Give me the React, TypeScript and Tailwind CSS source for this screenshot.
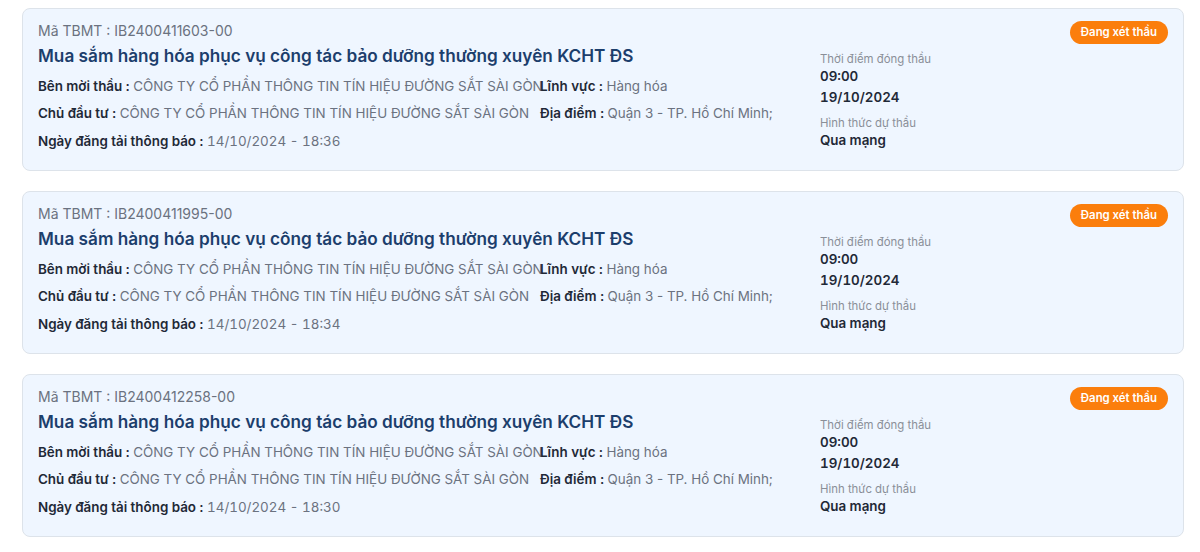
import React from 'react';

type Tender = {
  code: string;
  posted: string;
};

const tenders: Tender[] = [
  { code: 'IB2400411603-00', posted: '14/10/2024 - 18:36' },
  { code: 'IB2400411995-00', posted: '14/10/2024 - 18:34' },
  { code: 'IB2400412258-00', posted: '14/10/2024 - 18:30' },
];

const COMPANY = 'CÔNG TY CỔ PHẦN THÔNG TIN TÍN HIỆU ĐƯỜNG SẮT SÀI GÒN';

function Field({ label, value, nums }: { label: string; value: string; nums?: boolean }) {
  return (
    <span className="whitespace-nowrap">
      <span className="font-semibold text-[#1f2937]">{label} : </span>
      <span className={nums ? 'tabular-nums text-[#6b7280]' : 'text-[#6b7280]'}>{value}</span>
    </span>
  );
}

function TenderCard({ item }: { item: Tender }) {
  return (
    <div className="box-border flex h-[163px] rounded-lg border border-[#dde3ea] bg-[#eff6ff] px-[15px] pt-3 mb-5">
      <div className="flex-1 min-w-0 text-[13.4px]">
        <div className="text-sm leading-5 text-[#6b7280]">Mã TBMT : {item.code}</div>
        <div className="mt-[1px] text-[17.2px] leading-7 font-semibold text-[#1c3e6c]">
          Mua sắm hàng hóa phục vụ công tác bảo dưỡng thường xuyên KCHT ĐS
        </div>
        <div className="mt-[3px] flex leading-[27px]">
          <div className="w-[502px] shrink-0">
            <Field label="Bên mời thầu" value={COMPANY} />
          </div>
          <Field label="Lĩnh vực" value="Hàng hóa" />
        </div>
        <div className="flex leading-[27px]">
          <div className="w-[502px] shrink-0">
            <Field label="Chủ đầu tư" value={COMPANY} />
          </div>
          <Field label="Địa điểm" value="Quận 3 - TP. Hồ Chí Minh;" />
        </div>
        <div className="leading-[28px]">
          <Field label="Ngày đăng tải thông báo" value={item.posted} nums />
        </div>
      </div>
      <div className="w-[348px] shrink-0">
        <div className="flex justify-end">
          <span className="h-[23px] rounded-full bg-[#fb7e0c] px-[11px] text-[11.4px] leading-[23px] font-semibold text-white">
            Đang xét thầu
          </span>
        </div>
        <div className="mt-[7px] text-[11.4px] leading-4 text-[#8a8f98]">Thời điểm đóng thầu</div>
        <div className="text-[13.4px] leading-[18px] font-semibold tabular-nums text-[#1f2937]">09:00</div>
        <div className="text-[13.4px] leading-6 font-semibold tabular-nums text-[#1f2937]">19/10/2024</div>
        <div className="mt-[6px] text-[11.4px] leading-4 text-[#8a8f98]">Hình thức dự thầu</div>
        <div className="text-[13.4px] leading-[18px] font-semibold text-[#1f2937]">Qua mạng</div>
      </div>
    </div>
  );
}

export default function App() {
  return (
    <div className="min-h-[552px] w-full bg-white pl-[22px] pr-4 pt-2 font-['Inter','Noto_Sans',sans-serif]">
      {tenders.map((t) => (
        <TenderCard key={t.code} item={t} />
      ))}
    </div>
  );
}
